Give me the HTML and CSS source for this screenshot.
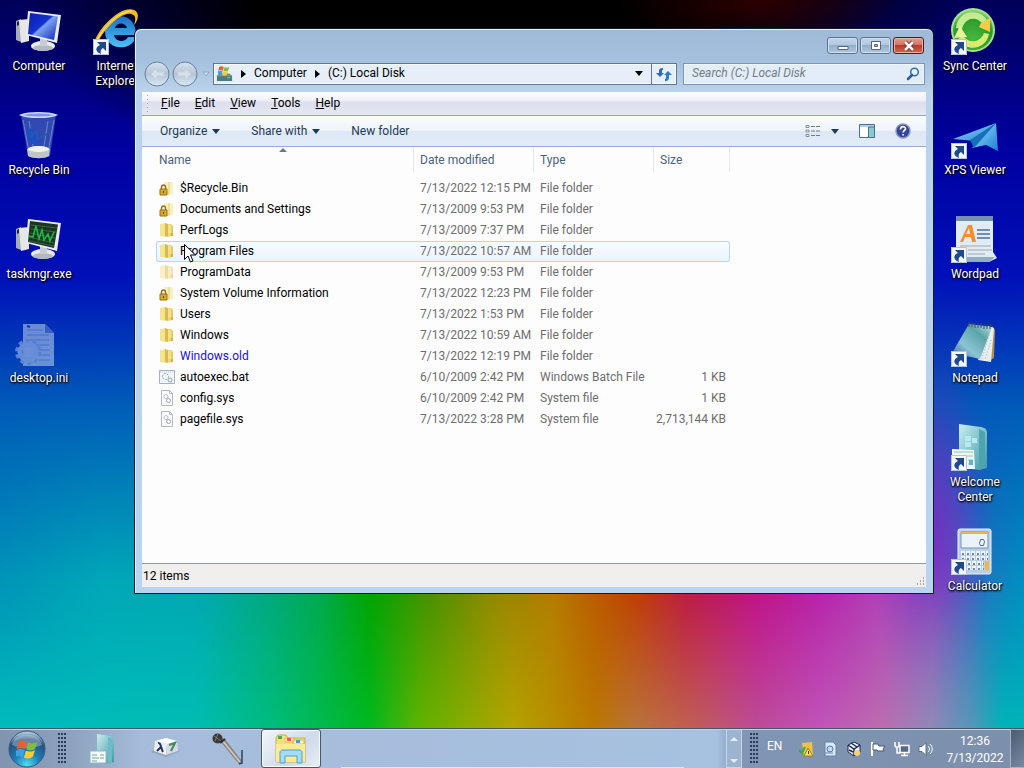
FILE: index.html
```html
<!DOCTYPE html>
<html lang="en">
<head>
  <meta charset="UTF-8" />
  <meta name="viewport" content="width=device-width, initial-scale=1.0"/>
  <title>(C:) Local Disk</title>
  <link rel="stylesheet" href="styles.css">
</head>
<body>

<!-- Shared icon shapes -->
<svg class="defs" aria-hidden="true">
  <defs>
    <linearGradient id="gFolder" x1="0" x2="1"><stop offset="0" stop-color="#f6e896"/><stop offset="1" stop-color="#e2c65c"/></linearGradient>
    <linearGradient id="gScreen" x1="0" y1="0" x2="1" y2="1"><stop offset="0" stop-color="#0c1cb4"/><stop offset=".45" stop-color="#1430d0"/><stop offset=".5" stop-color="#7ba4f4"/><stop offset="1" stop-color="#0d20b0"/></linearGradient>
    <linearGradient id="gTeal" x1="0" y1="0" x2="1" y2="1"><stop offset="0" stop-color="#c9eef0"/><stop offset="1" stop-color="#3d97a8"/></linearGradient>
    <linearGradient id="gPage" x1="0" y1="1" x2="1" y2="0"><stop offset="0" stop-color="#2c5c9c"/><stop offset=".35" stop-color="#8cc4d4"/><stop offset=".7" stop-color="#5ca4a8"/><stop offset="1" stop-color="#c4e4e4"/></linearGradient>
    <linearGradient id="gPlane" x1="0" y1="0" x2="1" y2="1"><stop offset="0" stop-color="#9fe0fa"/><stop offset="1" stop-color="#1c7fd6"/></linearGradient>
    <linearGradient id="gIe" x1="0" y1="0" x2="0" y2="1"><stop offset="0" stop-color="#1b6fc4"/><stop offset="1" stop-color="#4fc0f6"/></linearGradient>
    <radialGradient id="gSync" cx=".5" cy=".7" r=".7"><stop offset="0" stop-color="#46b83c"/><stop offset=".7" stop-color="#2c9a2c"/><stop offset="1" stop-color="#8fd97a"/></radialGradient>
    <radialGradient id="gOrb" cx=".5" cy=".95" r=".9"><stop offset="0" stop-color="#4fe0f4"/><stop offset=".4" stop-color="#1c7fb8"/><stop offset=".8" stop-color="#264f7c"/><stop offset="1" stop-color="#a8c4dc"/></radialGradient>
    <linearGradient id="gNav" x1="0" y1="0" x2="0" y2="1"><stop offset="0" stop-color="#d6e2ee"/><stop offset=".5" stop-color="#b5c6d8"/><stop offset="1" stop-color="#dbe9f5"/></linearGradient>
  </defs>
  <symbol id="shortcut" viewBox="0 0 16 16">
    <path d="M0 0h16v16H0z" fill="#f4f7fb"/><path d="M.5.5h15v15H.5z" fill="none" stroke="#b4c4d8"/>
    <path d="M4 3h9v9l-3-3c-2 1-3 3-2 6-6-2-6-7-1-9z" fill="#1d4a8c"/>
  </symbol>
  <symbol id="folder" viewBox="0 0 16 16">
    <path d="M1 2l6-1v14l-6-1z" fill="#f4e48c"/><path d="M7 2h5l2 2v10l-6 1z" fill="url(#gFolder)"/><path d="M6 1l3 1v13l-3-1z" fill="#d9ba4c"/><path d="M9 3h3v8H9z" fill="#f3e28c"/><path d="M12 11h2v3h-2z" fill="#e8a848"/>
  </symbol>
  <symbol id="lock" viewBox="0 0 16 16">
    <path d="M5 2h8l1 1v11l-6 1z" fill="#f8f0c0"/><path d="M9 2h2v12l-2 1z" fill="#ecdf9a"/>
    <path d="M2.500 9V7.500a2 2.500 0 0 1 4 0V9" fill="none" stroke="#96721c" stroke-width="1.500"/><path d="M1 9h7v6H1z" fill="#d8a928" stroke="#9a7010"/><path d="M4 11h1v2H4z" fill="#604000"/>
  </symbol>
  <symbol id="sys" viewBox="0 0 16 16">
    <path d="M2.500.5h8l3 3v12h-11z" fill="#fbfbfd" stroke="#b4b8c0"/><path d="M10.500.5v3h3" fill="none" stroke="#b4b8c0"/>
    <circle cx="7" cy="6.500" r="2" fill="none" stroke="#8a94a4" stroke-dasharray="1 .6"/><circle cx="9.500" cy="10.500" r="2" fill="none" stroke="#a0a8b4"/>
  </symbol>
  <symbol id="flag" viewBox="0 0 20 18">
    <path d="M2 3c3-2 5-1 7.500 0L8 9C6 8 3 8 .5 9z" fill="#e8602c"/><path d="M10.500 3.500c3 1 5 1 8-.5l-2 6c-2 1.500-5 1.500-7.500.5z" fill="#7fbf3c"/>
    <path d="M.2 10c3-1.500 5-1 7.500 0L6 16c-2-1-4-1-7.500 0z" fill="#3d9fe4"/><path d="M8.500 10.500c3 1 5 1 8-.5l-2 6c-2 1.500-5 1.500-7.500.5z" fill="#f8cc38"/>
  </symbol>
  <symbol id="box" viewBox="0 0 48 48">
    <path d="M1 13l5-2v23l-5-2z" fill="#a8acb4"/><path d="M4 12l10-1v22l-8 2z" fill="#e4e6e8"/><path d="M2 14l2-1v4l-2 1z" fill="#20282c"/>
    <ellipse cx="28" cy="38" rx="12" ry="5" fill="#e8eaec"/><ellipse cx="28" cy="40" rx="10" ry="3" fill="#b4b8c0"/><path d="M25 30h7v8h-7z" fill="#c8ccd0"/>
    <path d="M13 3l33 4-4 28-31-8z" fill="#e9ebec"/>
  </symbol>
</svg>

<!-- Desktop -->
<main class="desktop">
  <div class="icons icons-left">
    <a class="icon" href="#computer">
      <svg viewBox="0 0 48 48"><use href="#box"/><path d="M15 5l28 3.500-4 23.500-26-6z" fill="url(#gScreen)"/></svg>
      <span>Computer</span>
    </a>
    <a class="icon" href="#recycle">
      <svg viewBox="0 0 48 48"><path d="M6 3h35l-6 41c-5 3-17 3-22 0z" fill="#3d5cb8" opacity=".8"/><path d="M6 3c8-3 27-3 35 0-7 3-28 3-35 0z" fill="#8298dc" stroke="#cbd6f0" stroke-width="1.500"/><path d="M8 8l6 32M39 8l-6 32M14 9l4 25M33 9l-4 25" stroke="#a8b8e8" opacity=".5"/><path d="M12 18c6-5 8 5 11 5s3 8-3 9-9-4-8-14z" fill="#1c4fc0"/><path d="M15 25l6-6 2 8 12-7" stroke="#2c54b0" stroke-width="2" fill="none"/><path d="M12 37c5-4 18-4 23 0l-1 7c-5 3-16 3-21 0z" fill="#c0c4cc"/><ellipse cx="23.500" cy="37" rx="10.500" ry="3" fill="#f0f2ea"/></svg>
      <span>Recycle Bin</span>
    </a>
    <a class="icon" href="#taskmgr">
      <svg viewBox="0 0 48 48"><use href="#box"/><path d="M15 5l28 3.500-4 23.500-26-6z" fill="#1c3424"/><path d="M16 9l26 3M16 13l25 3M15 17l25 5M14 21l25 6M14 25l25 5" stroke="#306a40"/><path d="M14 20l4 1 3-11 3 13 3-9 2 10 4-6 2 7 4-9" fill="none" stroke="#20b844" stroke-width="1.500"/></svg>
      <span>taskmgr.exe</span>
    </a>
    <a class="icon" href="#desktopini">
      <svg viewBox="0 0 48 48" opacity=".65"><path d="M8 4h22l9 9v33H8z" fill="#a4bce8"/><path d="M30 4v9h9z" fill="#5078c8"/><path d="M12 10h16M12 15h22M12 20h22M12 25h22M21 30h14M24 35h11M24 40h11" stroke="#6d8fd4"/><path d="M12 6l3 1" stroke="#183c90" stroke-width="2"/><circle cx="13" cy="32" r="11" fill="none" stroke="#86a6e0" stroke-width="4" stroke-dasharray="4 3"/><circle cx="13" cy="32" r="8" fill="none" stroke="#9cb8e8" stroke-width="5"/></svg>
      <span>desktop.ini</span>
    </a>
  </div>
  <div class="icons icons-second">
    <a class="icon" href="#ie">
      <svg viewBox="0 0 48 48"><path d="M43 27H21c1 7 11 8 14 2h8c-5 15-30 14-31-5C12 4 43 1 43 27zM22 20h12c-1-6-11-6-12 0z" fill="url(#gIe)"/><path d="M2 40C-4 31 25-4 41 2c7 3 3 12 0 15 2-6 2-10-3-11C26 4 8 25 2 40z" fill="#f0b828"/><path d="M3 34C11 18 25 4 39 3" fill="none" stroke="#fff08c"/><use href="#shortcut" x="0" y="31" width="16" height="16"/></svg>
      <span>Internet Explorer</span>
    </a>
  </div>
  <div class="icons icons-right">
    <a class="icon" href="#sync">
      <svg viewBox="0 0 48 48"><circle cx="22" cy="22" r="22" fill="#a8e090"/><circle cx="22" cy="22" r="20" fill="url(#gSync)"/><path d="M5 20C6 8 16 2 27 5c4 1 7 4 9 7l-5 3c-6-7-17-6-20 6z" fill="#c4ec90"/><path d="M30 15l9-5v14l-11-5z" fill="#f4cc48"/><path d="M38 26c-2 11-13 17-24 12-3-1-5-4-7-7l5-3c6 8 17 7 21-3z" fill="#d8ec70"/><path d="M3 30l6-12 7 11z" fill="#e8f49c"/><use href="#shortcut" x="0" y="31" width="16" height="16"/></svg>
      <span>Sync Center</span>
    </a>
    <a class="icon" href="#xps">
      <svg viewBox="0 0 48 48"><path d="M2 27L45 11 24 29z" fill="url(#gPlane)"/><path d="M45 11l2 28-12-6-14 3z" fill="url(#gPlane)"/><path d="M45 11L23 36l-4-8z" fill="#1470b8"/><use href="#shortcut" x="0" y="31" width="16" height="16"/></svg>
      <span>XPS Viewer</span>
    </a>
    <a class="icon" href="#wordpad">
      <svg viewBox="0 0 48 48"><path d="M5 0h37v36l4 6-8 4H5z" fill="#e0ebf4"/><path d="M5 0h37v5H5z" fill="#7590a8"/><path d="M6 41h38l-6 5H6z" fill="#93aac8"/><path d="M9 26l8-17h4l4 17h-4l-1-5h-6l-2 5zM15 18h4l-1-6z" fill="#f09030"/><path d="M26 14h13M26 18h13M26 22h13" stroke="#4c7098" stroke-width="1.500"/><path d="M9 30h31M17 34h24M17 38h17" stroke="#a0a8b0"/><use href="#shortcut" x="0" y="31" width="16" height="16"/></svg>
      <span>Wordpad</span>
    </a>
    <a class="icon" href="#notepad">
      <svg viewBox="0 0 48 48"><path d="M41 6l3 4-1 28-5 3z" fill="#b09050"/><path d="M37 6l6 2-3 34-13-2z" fill="#e8eef0"/><path d="M18 4l23 3-12 32L1 33z" fill="url(#gPage)"/><path d="M18 2v5M21 2v5M24 3v5M27 3v5M30 3v5M33 4v5M36 4v5M39 4v5" stroke="#404c54"/><path d="M38 15l-7 24M40 20l-6 20" stroke="#a4b0b4" stroke-dasharray="1 2"/><use href="#shortcut" x="0" y="31" width="16" height="16"/></svg>
      <span>Notepad</span>
    </a>
    <a class="icon" href="#welcome">
      <svg viewBox="0 0 48 48"><path d="M8 0l22 3c5 1 6 3 6 6v35l-8 2-20-3z" fill="url(#gTeal)"/><path d="M28 5l6 3v36l-6 2z" fill="#4ca4ac"/><path d="M14 12h6v5h-6zM14 18h6v5h-6zM21 14h5v5h-5z" fill="#b8e8f0"/><path d="M1 25l22 1 1 19H1z" fill="#f0f8f4"/><path d="M3 28h19M15 32h7M17 36h5M17 40h5" stroke="#90c8a8"/><path d="M18 36h4v5h-4z" fill="#5cb8c8"/><use href="#shortcut" x="0" y="31" width="16" height="16"/></svg>
      <span>Welcome Center</span>
    </a>
    <a class="icon" href="#calc">
      <svg viewBox="0 0 48 48"><rect x="7" y="1" width="33" height="45" rx="2" fill="#b9d0e8" stroke="#eaf3fb"/><path d="M10 4h27v16H10z" fill="#eaf2fa" stroke="#7893b0"/><path d="M10 4h27v2H10z" fill="#f0b048"/><path d="M29.500 11.500h3l1 2-1 4h-3l-1-2z" fill="none" stroke="#546894"/><path d="M10 25h27M10 30h27M16 35h16M16 40h16" stroke="#eef4fa" stroke-width="4" stroke-dasharray="4 1"/><path d="M11 26h26M11 31h26M17 36h16M17 41h16" stroke="#6a8ab0" stroke-width="2" stroke-dasharray="2 3"/><path d="M34 33h4v9h-4z" fill="#f0b848"/><use href="#shortcut" x="0" y="31" width="16" height="16"/></svg>
      <span>Calculator</span>
    </a>
  </div>

  <!-- Explorer window -->
  <section class="window">
    <div class="title-bar">
      <button class="win-btn" aria-label="Minimize"><svg width="14" height="12"><path d="M2 6.500h10v3H2z" fill="#fff" stroke="#56687e"/></svg></button>
      <button class="win-btn" aria-label="Maximize"><svg width="14" height="12"><path d="M2.500 1.500h9v8h-9z" fill="#fff" stroke="#56687e"/><path d="M5.500 4.500h3v2h-3z" fill="#9db5d0" stroke="#56687e"/></svg></button>
      <button class="win-btn close" aria-label="Close"><svg width="14" height="12"><path d="M3 2l8 8M11 2l-8 8" stroke="#6a2a2c" stroke-width="4"/><path d="M3 2l8 8M11 2l-8 8" stroke="#fff" stroke-width="2.500"/></svg></button>
    </div>

    <div class="nav-row">
      <div class="nav-btns">
        <button aria-label="Back"><svg width="26" height="26"><circle cx="13" cy="13" r="12" fill="url(#gNav)" stroke="#697f96"/><path d="M13 7l-6 6 6 6v-4h7v-4h-7z" fill="#d4e0ea" stroke="#c4d2e0"/></svg></button>
        <button aria-label="Forward"><svg width="26" height="26"><circle cx="13" cy="13" r="12" fill="url(#gNav)" stroke="#697f96"/><path d="M13 7l6 6-6 6v-4H6v-4h7z" fill="#d4e0ea" stroke="#c4d2e0"/></svg></button>
        <svg width="8" height="6"><path d="M1 1h6L4 5z" fill="#d4e4f4" stroke="#8ba6c4"/></svg>
      </div>
      <div class="address">
        <svg class="drive" viewBox="0 0 18 18"><path d="M1 11l3-2h10l3 2v6H1z" fill="#7e8c8c"/><path d="M1 12h16v5H1z" fill="#4a7c80"/><path d="M12 13.500h3" stroke="#70f070"/><use href="#flag" x="2" y="0" width="13" height="12"/></svg>
        <svg width="5" height="8"><path d="M0 0l5 4-5 4z"/></svg>
        <button>Computer</button>
        <svg width="5" height="8"><path d="M0 0l5 4-5 4z"/></svg>
        <button>(C:) Local Disk</button>
        <button class="addr-drop" aria-label="Previous locations"><svg width="8" height="5"><path d="M0 0h8L4 5z"/></svg></button>
        <button class="refresh" aria-label="Refresh"><svg width="16" height="14"><path d="M0 6h3V4c0-2 1-3 4-3v2C6 3 6 3 6 6h2l-4 4z" fill="#2c6cb0"/><path d="M16 8h-3v2c0 3-1 4-4 4v-2c1 0 1-1 1-4H8l4-4z" fill="#2c7cc0"/></svg></button>
      </div>
      <div class="search">
        <input type="text" aria-label="Search" placeholder="Search (C:) Local Disk" />
        <svg width="14" height="14"><circle cx="8.500" cy="5" r="3.800" fill="#e4f0fa" stroke="#2f6ca8" stroke-width="1.500"/><path d="M6 8l-4 4" stroke="#2f5c94" stroke-width="2.500" stroke-linecap="round"/></svg>
      </div>
    </div>

    <div class="pane">
      <nav class="menu-bar">
        <button><u>F</u>ile</button>
        <button><u>E</u>dit</button>
        <button><u>V</u>iew</button>
        <button><u>T</u>ools</button>
        <button><u>H</u>elp</button>
      </nav>

      <div class="tool-bar">
        <button>Organize <svg width="8" height="5"><path d="M0 0h8L4 5z"/></svg></button>
        <button>Share with <svg width="8" height="5"><path d="M0 0h8L4 5z"/></svg></button>
        <button>New folder</button>
        <div class="tool-right">
          <button aria-label="Change view"><svg width="16" height="14"><path d="M1 1.500h3v2H1zM1 6h3v2H1zM1 10.500h3v2H1z" fill="#fff" stroke="#8090a8"/><path d="M6 2.500h9M6 7h9M6 11.500h9" stroke="#6a7890" stroke-dasharray="4 1"/></svg><svg width="8" height="5"><path d="M0 0h8L4 5z"/></svg></button>
          <button aria-label="Preview pane"><svg width="16" height="14"><path d="M.5.5h15v13H.5z" fill="#fff" stroke="#48708c"/><path d="M1 1h14v2H1z" fill="#b9d0e4"/><path d="M9.500 3h6v10.500h-6z" fill="#8cc8d0" stroke="#3f7890"/></svg></button>
          <button aria-label="Help"><svg width="16" height="16"><circle cx="8" cy="8" r="7" fill="#34449c" stroke="#8c98b8" stroke-width="1.500"/><path d="M5.500 6.500c0-4 5-3.500 5-.8 0 1.800-2.300 1.600-2.300 3.800M8.200 11v1.500" fill="none" stroke="#fff" stroke-width="1.700"/></svg></button>
        </div>
      </div>

      <div class="files">
        <table>
          <thead>
            <tr><th class="c-name">Name<svg width="8" height="4"><path d="M0 4l4-4 4 4z" fill="#68788a"/></svg></th><th class="c-date">Date modified</th><th class="c-type">Type</th><th class="c-size">Size</th></tr>
          </thead>
          <tbody>
            <tr><td><svg><use href="#lock"/></svg>$Recycle.Bin</td><td>7/13/2022 12:15 PM</td><td>File folder</td><td></td></tr>
            <tr><td><svg><use href="#lock"/></svg>Documents and Settings</td><td>7/13/2009 9:53 PM</td><td>File folder</td><td></td></tr>
            <tr><td><svg><use href="#folder"/></svg>PerfLogs</td><td>7/13/2009 7:37 PM</td><td>File folder</td><td></td></tr>
            <tr class="hover"><td><svg><use href="#folder"/></svg>Program Files</td><td>7/13/2022 10:57 AM</td><td>File folder</td><td></td></tr>
            <tr class="hidden-item"><td><svg><use href="#folder"/></svg>ProgramData</td><td>7/13/2009 9:53 PM</td><td>File folder</td><td></td></tr>
            <tr><td><svg><use href="#lock"/></svg>System Volume Information</td><td>7/13/2022 12:23 PM</td><td>File folder</td><td></td></tr>
            <tr><td><svg><use href="#folder"/></svg>Users</td><td>7/13/2022 1:53 PM</td><td>File folder</td><td></td></tr>
            <tr><td><svg><use href="#folder"/></svg>Windows</td><td>7/13/2022 10:59 AM</td><td>File folder</td><td></td></tr>
            <tr class="compressed"><td><svg><use href="#folder"/></svg>Windows.old</td><td>7/13/2022 12:19 PM</td><td>File folder</td><td></td></tr>
            <tr><td><svg viewBox="0 0 16 16"><path d="M.5 1.500h15v13H.5z" fill="#f2f6fa" stroke="#a4b2c4"/><path d="M1 3h14" stroke="#b4c4d4" stroke-dasharray="1 1"/><circle cx="6.500" cy="7.500" r="3" fill="none" stroke="#90a4bc" stroke-dasharray="2 1"/><circle cx="11" cy="11" r="2" fill="none" stroke="#90a4bc"/></svg>autoexec.bat</td><td>6/10/2009 2:42 PM</td><td>Windows Batch File</td><td>1 KB</td></tr>
            <tr><td><svg><use href="#sys"/></svg>config.sys</td><td>6/10/2009 2:42 PM</td><td>System file</td><td>1 KB</td></tr>
            <tr><td><svg><use href="#sys"/></svg>pagefile.sys</td><td>7/13/2022 3:28 PM</td><td>System file</td><td>2,713,144 KB</td></tr>
          </tbody>
        </table>
      </div>

      <div class="status-bar">
        <span>12 items</span>
        <svg width="10" height="10"><path d="M8 1h1M5 4h1M8 4h1M2 7h1M5 7h1M8 7h1" stroke="#a8a8a8" stroke-width="2"/></svg>
      </div>
    </div>
  </section>

  <svg class="cursor" width="12" height="20"><path d="M.5.5v15l3.500-3.500 2.500 6 2.500-1-2.500-6h5z" fill="#fff" stroke="#000"/></svg>
</main>

<!-- Taskbar -->
<footer class="taskbar">
  <button class="start" aria-label="Start"><svg width="38" height="38" viewBox="0 0 38 38"><circle cx="19" cy="19" r="18" fill="url(#gOrb)" stroke="#38587c"/><path d="M4 15C7 1 31 1 34 15c-9 4-21 4-30 0z" fill="#fff" opacity=".3"/><use href="#flag" x="8" y="8" width="23" height="22"/></svg></button>
  <span class="grip"></span>
  <button class="task" aria-label="Welcome Center"><svg width="32" height="32" viewBox="0 0 32 32"><path d="M9 1l14 2c3 1 3 2 3 4v22l-5 2-12-2z" fill="url(#gTeal)"/><path d="M20 4l4 2v24l-4 1z" fill="#6cbcc8"/><path d="M2 18h16v12H2z" fill="#f4fafa" stroke="#8cb8bc"/><path d="M4 22h5M4 25h7M4 28h5M12 22h4M12 25h4" stroke="#70a898"/></svg></button>
  <button class="task" aria-label="Input panel"><svg width="32" height="32" viewBox="0 0 32 32"><path d="M1 19l15 5 14-6-4-2H5z" fill="#8090a4" opacity=".5"/><path d="M5 8l11-3 11 3-10 3z" fill="#fff"/><path d="M5 8l12 3-1 11-12-4z" fill="#eceff4"/><path d="M17 11l10-3 1 10-12 4z" fill="#d4dbe4"/><path d="M8 10c3-1 3 6 5 9M11 14l-4 4" fill="none" stroke="#27336e" stroke-width="2"/><path d="M19 12l6-2-4 8" fill="none" stroke="#438860" stroke-width="2"/></svg></button>
  <button class="task" aria-label="Sound recorder"><svg width="32" height="32" viewBox="0 0 32 32"><path d="M8 8l4-3 18 23-3 3z" fill="#8a8480"/><path d="M10 7l18 22" stroke="#d4ccc4" stroke-width="1.500"/><circle cx="5.500" cy="5.500" r="5" fill="#3c3838"/><path d="M2 3l7 5M6 1l-3 7" stroke="#807878"/><path d="M8 10l5-4" stroke="#282828" stroke-width="2"/><path d="M30 17v13l-3 1" fill="none" stroke="#244466" stroke-width="1.500"/></svg></button>
  <button class="task active" aria-label="Windows Explorer"><svg width="34" height="32" viewBox="0 0 34 32"><path d="M2 5l2-3h8l2 3h17v24H2z" fill="#f6e07c" stroke="#cfa848"/><path d="M11 5h9v4h-9zM19 7h11v4H19z" fill="#fcf6d0" stroke="#d8b860"/><path d="M4 3h4v3H4z" fill="#45b058"/><path d="M13 5h4v3h-4z" fill="#e06838"/><path d="M22 7h4v3h-4z" fill="#4898d8"/><path d="M2 11h29v18H2z" fill="#faea94"/><path d="M6 30V20c0-2 1-3 3-3h16c2 0 3 1 3 3v10h-5v-7H11v7z" fill="#a4dcf4" stroke="#4ca0cc"/></svg></button>
  <div class="task-space"></div>
  <div class="scroller">
    <button aria-label="Scroll up"><svg width="8" height="4"><path d="M0 4l4-4 4 4z" fill="#e2edf8"/></svg></button>
    <button aria-label="Scroll down"><svg width="8" height="4"><path d="M0 0h8L4 4z" fill="#e2edf8"/></svg></button>
  </div>
  <span class="grip"></span>
  <span class="lang">EN</span>
  <div class="tray">
    <svg viewBox="0 0 16 16"><path d="M4 2l10-1 1 13-9 1z" fill="#f0c440"/><path d="M10 7l5 8H6z" fill="#ffe070" stroke="#a87c10"/><path d="M10.500 10v3" stroke="#503800"/><path d="M1 9l3 3 3-6" fill="none" stroke="#40a840" stroke-width="2"/></svg>
    <svg viewBox="0 0 16 16"><path d="M3 1h8l3 3v11H3z" fill="#dce8f4" stroke="#6484a8"/><circle cx="8" cy="8" r="3" fill="#c4dcf0" stroke="#4878b0"/><path d="M3 12h8" stroke="#5888c0"/></svg>
    <svg viewBox="0 0 16 16"><path d="M2 4l6-3 6 3v7l-6 4-6-4z" fill="#f0f4f8" stroke="#1c2c50"/><path d="M2 4l6 4 6-4M8 8v7M3 9l4 2M5 2l6 4" stroke="#1c2c50" stroke-width="1.500" fill="none"/><circle cx="11" cy="12" r="3" fill="#f4d468"/></svg>
    <svg viewBox="0 0 16 16"><path d="M2 1v14" stroke="#fff" stroke-width="2"/><path d="M3 3h5l1 2h6l-2 3 1 2H8L7 9H3z" fill="#fff" stroke="#485870"/></svg>
    <svg viewBox="0 0 16 16"><path d="M6 4.500h9v7H6z" fill="#566a84" stroke="#fff" stroke-width="1.500"/><path d="M7 14.500h7M10.500 12v2" stroke="#fff" stroke-width="1.500"/><path d="M1 1v3c0 3 4 3 4 0V1M3 6v6h3" fill="none" stroke="#fff" stroke-width="1.500"/></svg>
    <svg viewBox="0 0 16 16"><path d="M1 5.500h3l4-4v13l-4-4H1z" fill="#fff" stroke="#5c6c84"/><path d="M10 5c2 2 2 4 0 6M12 3c3 3 3 7 0 10" fill="none" stroke="#fff"/></svg>
  </div>
  <div class="clock"><span>12:36</span><span>7/13/2022</span></div>
  <button class="show-desktop" aria-label="Show desktop"></button>
</footer>

</body>
</html>
```
FILE: styles.css
```css
* {
  margin: 0;
  padding: 0;
  box-sizing: border-box;
}

body {
  font-family: Roboto, "Open Sans", sans-serif;
  font-size: 12px;
  line-height: 15px;
  height: 100vh;
  display: flex;
  flex-direction: column;
  overflow: hidden;
}

button,
input {
  font: inherit;
  color: inherit;
  background: none;
  border: none;
}

.defs {
  position: absolute;
  width: 0;
  height: 0;
}

/* Desktop */
.desktop {
  flex: 1;
  position: relative;
  background:
    radial-gradient(ellipse 14% 50px at 74% 0, #2c0000, transparent),
    radial-gradient(ellipse 46% 200px at 48% 0, #000 50%, transparent),
    radial-gradient(ellipse 6% 180px at 91% 74%, rgba(120, 20, 200, 0.6), transparent),
    linear-gradient(to bottom, #000058 0, #0000a0 20%, #0010b8 38%, #0054b8e0 56%, #0090b800 80%),
    linear-gradient(to right, #0094b8 0, #00a8b8 10%, #00a8b0 20%, #00a880 26%, #00a850 31%, #00a400 36%, #488f00 42%, #8f8800 48%, #b47c00 54%, #c03c00 62%, #bc1840 67%, #c01088 74%, #b820a8 80%, #b040b8 86%, #8c5cb8 91%, #1c78c0 96%, #0090c0 100%);
}

/* Paler colours toward the bottom of the wallpaper */
.desktop::before {
  content: "";
  position: absolute;
  inset: 80% 0 0;
  background: linear-gradient(to right, #00bcbc 0, #00bcb4 19%, #00bc78 27%, #00b820 36%, #60b400 41%, #b4a400 50%, #bc7800 58%, #b87438 62%, #c06050 67%, #bc4c98 74%, #c054b8 80%, #bc6cb0 86%, #9088b8 91%, #5098b8 95%, #00b4b8 98%);
  mask-image: linear-gradient(transparent, #000);
}

.icons {
  position: absolute;
  top: 0;
  display: flex;
  flex-direction: column;
}

.icons-left {
  left: 0;
}

.icons-second {
  left: 78px;
}

.icons-right {
  right: 10px;
}

.icon {
  width: 78px;
  height: 104px;
  padding: 8px 8px 0;
  display: flex;
  flex-direction: column;
  align-items: center;
  gap: 3px;
  color: white;
  text-align: center;
  text-decoration: none;
  text-shadow: 1px 1px 2px black, 0 1px 2px black;
}

.icon svg {
  width: 48px;
  height: 48px;
  flex: none;
}

.icon span {
  margin: 0 -8px;
}

.icons-second .icon span,
.icons-right .icon span {
  max-width: 70px;
}

/* Explorer window */
.window {
  position: absolute;
  top: 28px;
  left: 134px;
  right: 90px;
  bottom: 134px;
  padding: 0 7px 6px;
  display: flex;
  flex-direction: column;
  border: 1px solid #101c2c;
  border-radius: 7px 7px 0 0;
  background: linear-gradient(to bottom, #9ebad6 0, #a4c0dc 30px, #bad2ec 62px, #b9d4ee 100%);
  box-shadow: inset 0 1px 0 #e4f0fa, inset 1px 0 0 #dcecfa;
}

.title-bar {
  height: 29px;
  padding: 8px 2px 0;
  display: flex;
  justify-content: flex-end;
  gap: 2px;
}

.win-btn {
  width: 31px;
  height: 17px;
  display: flex;
  align-items: center;
  justify-content: center;
  border: 1px solid #5c7490;
  border-radius: 3px;
  background: linear-gradient(#c2d5e8 0, #b2c8e0 45%, #94adc8 50%, #b0c8e0);
  box-shadow: inset 0 0 0 1px #d2e0ee;
}

.win-btn.close {
  border-color: #4c1c24;
  background: linear-gradient(#e4a090 0, #d07464 45%, #b83c28 50%, #cc6850);
  box-shadow: inset 0 0 0 1px #e8b0a4;
}

.nav-row {
  height: 34px;
  padding: 0 1px 3px 2px;
  display: flex;
  align-items: center;
}

.nav-btns {
  width: 69px;
  flex: none;
  display: flex;
  align-items: center;
  gap: 2px;
}

.nav-btns button {
  width: 26px;
  height: 26px;
}

.nav-btns > svg {
  margin-left: 2px;
}

.address {
  flex: 1;
  height: 22px;
  display: flex;
  align-items: center;
  gap: 8px;
  padding-left: 2px;
  border: 1px solid #5e7892;
  background: #e6eff8;
  box-shadow: inset 0 0 0 1px #f6fafd;
}

.address .drive {
  width: 17px;
  height: 17px;
}

.addr-drop {
  margin-left: auto;
}

.refresh {
  width: 25px;
  height: 20px;
  border-left: 1px solid #5e7892;
}

.address svg,
.refresh svg {
  vertical-align: middle;
}

.search {
  width: 242px;
  height: 22px;
  margin-left: 6px;
  padding: 0 4px 0 8px;
  display: flex;
  align-items: center;
  border: 1px solid #7b96b2;
  background: #e3edf7;
  box-shadow: inset 0 0 0 1px #f0f6fb;
}

.search input {
  flex: 1;
  min-width: 0;
  outline: none;
}

.search input::placeholder {
  color: #727c88;
  font-style: italic;
}

.pane {
  flex: 1;
  display: flex;
  flex-direction: column;
  background: #fdfdfe;
}

/* Menu and tool bars */
.menu-bar {
  height: 24px;
  padding: 0 19px;
  display: flex;
  align-items: center;
  gap: 15px;
  border-bottom: 1px solid #94a4bc;
  background:
    repeating-linear-gradient(#a4b0c0 0 1px, transparent 1px 4px) 5px 3px / 1px 17px no-repeat,
    linear-gradient(#fbfcfe 0, #f0f2f9 35%, #dedfed 45%, #e5e7f3);
}

.tool-bar {
  height: 31px;
  padding: 0 15px 0 18px;
  display: flex;
  align-items: center;
  gap: 31px;
  color: #1e3955;
  border-bottom: 1px solid #98aec8;
  background: linear-gradient(#fbfdff 0, #eef4fb 48%, #dde8f4 52%, #e2ecf8);
}

.tool-bar button {
  display: flex;
  align-items: center;
  gap: 5px;
}

.tool-bar svg {
  fill: #1e3955;
}

.tool-right {
  margin-left: auto;
  display: flex;
  align-items: center;
  gap: 20px;
}

.tool-right button:first-child {
  gap: 10px;
}

/* File list */
.files {
  flex: 1;
  padding-left: 14px;
}

.files table {
  width: 574px;
  table-layout: fixed;
  border-collapse: separate;
  border-spacing: 0;
}

.files th {
  height: 25px;
  padding: 1px 6px 0;
  position: relative;
  text-align: left;
  font-weight: normal;
  color: #4c607a;
  border-right: 1px solid #e2eaf2;
}

.files th svg {
  position: absolute;
  top: 1px;
  left: 50%;
  margin-left: -6px;
}

.c-name {
  width: 258px;
}

.files .c-name {
  padding-left: 3px;
}

.c-date,
.c-type {
  width: 120px;
}

.files tbody::before {
  content: "";
  display: block;
  height: 6px;
}

.files td {
  height: 21px;
  padding: 2px 6px 0;
  color: #6d6d6d;
  vertical-align: baseline;
  white-space: nowrap;
}

.files td:first-child {
  padding-left: 3px;
  color: #000;
}

.files td:last-child {
  padding-left: 0;
  padding-right: 4px;
  text-align: right;
}

.files td svg {
  width: 16px;
  height: 16px;
  margin-right: 5px;
  vertical-align: -4px;
}

.files .hover td {
  padding-top: 1px;
  border: solid #b8d6f4;
  border-width: 1px 0;
  background: linear-gradient(#fafcff, #ebf3fd);
}

.files .hover td:first-child {
  padding-left: 2px;
  border-left-width: 1px;
  border-radius: 3px 0 0 3px;
}

.files .hover td:last-child {
  border-right-width: 1px;
  border-radius: 0 3px 3px 0;
}

.files .hidden-item svg {
  opacity: 0.5;
}

.files .compressed td:first-child {
  color: #1a10d8;
}

.status-bar {
  height: 24px;
  padding: 1px 1px 0;
  display: flex;
  align-items: center;
  justify-content: space-between;
  border-top: 1px solid #94989c;
  background: #f1eeee;
}

.status-bar svg {
  align-self: flex-end;
}

.cursor {
  position: absolute;
  top: 244px;
  left: 184px;
}

/* Taskbar */
.taskbar {
  height: 40px;
  display: flex;
  align-items: center;
  color: white;
  border-top: 1px solid #44566c;
  box-shadow: inset 0 1px 0 #c0d2e4;
  background: linear-gradient(to right, #7f95af 0, #8ca2be 7%, #a6bcda 14%, #a6c0de 60%, #a6c2e0 70%, #8096b4 72%, #7c8fab 100%);
}

.start {
  width: 38px;
  height: 38px;
  margin: 0 12px 0 8px;
}

.grip {
  width: 9px;
  height: 31px;
  background: radial-gradient(circle at 1px 1px, #2c3c54 1px, transparent 1px) 0 0 / 3px 4px;
}

.task {
  width: 62px;
  height: 39px;
  display: flex;
  align-items: center;
  justify-content: center;
}

.grip + .task {
  margin-left: 6px;
}

.task.active {
  width: 60px;
  margin-left: 2px;
  border: 1px solid #46586e;
  border-radius: 3px;
  background: linear-gradient(135deg, #f2f6fb, #cfdbea 60%, #e8eff7);
  box-shadow: inset 0 0 0 1px #f8fbfe;
}

.task-space {
  flex: 1;
  height: 39px;
  margin: 0 42px 0 20px;
  border-bottom: 1px solid #dbe7f4;
}

.scroller {
  width: 16px;
  height: 39px;
  display: flex;
  flex-direction: column;
  justify-content: space-between;
  border: 1px solid #c6d6e8;
  background: #9db4d0;
}

.scroller + .grip {
  margin: 0 8px 0 8px;
}

.lang {
  width: 31px;
  margin-bottom: 5px;
}

.tray {
  display: flex;
  gap: 8px;
}

.tray svg {
  width: 16px;
  height: 16px;
}

.clock {
  width: 70px;
  margin-left: 6px;
  padding-top: 2px;
  display: flex;
  flex-direction: column;
  align-items: center;
  line-height: 17px;
}

.show-desktop {
  width: 14px;
  height: 39px;
  border: 1px solid #a4b4c8;
  border-right: none;
  background: linear-gradient(135deg, #4c5c70, #7888a0);
}
```
